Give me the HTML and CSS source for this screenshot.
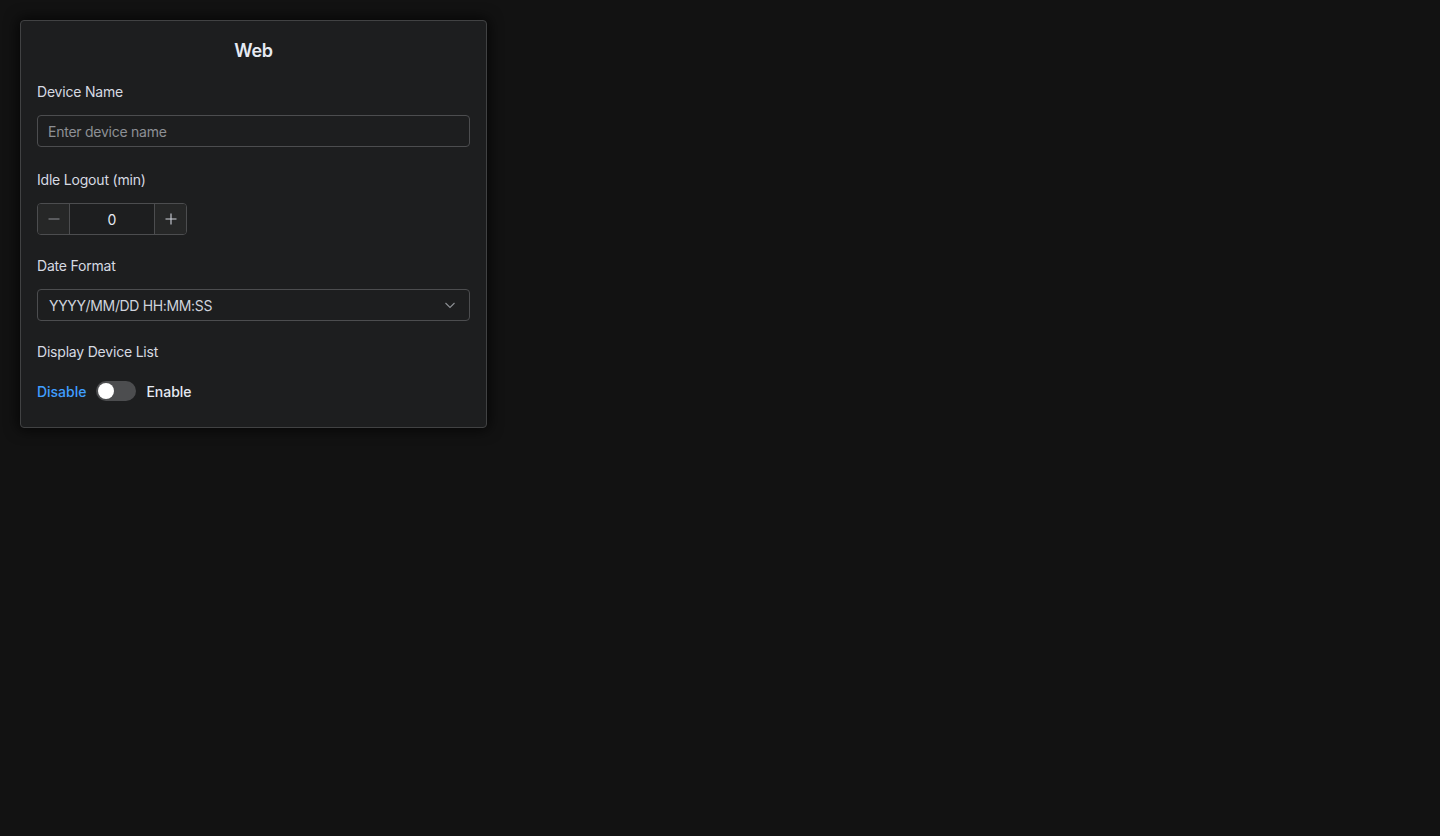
FILE: index.html
```html
<!DOCTYPE html>
<html lang="en">
<head>
<meta charset="utf-8">
<title>Web</title>
<link rel="stylesheet" href="styles.css">
</head>
<body>
<div class="card">
  <h2 class="title">Web</h2>
  <div class="field">
    <label class="label">Device Name</label>
    <div class="input"><input type="text" placeholder="Enter device name"></div>
  </div>
  <div class="field">
    <label class="label">Idle Logout (min)</label>
    <div class="number">
      <span class="nbtn minus"><svg viewBox="0 0 14 14" width="14" height="14"><path d="M1.5 7h11" stroke="currentColor" stroke-width="1.1" fill="none"/></svg></span>
      <span class="nval">0</span>
      <span class="nbtn plus"><svg viewBox="0 0 14 14" width="14" height="14"><path d="M1.5 7h11M7 1.5v11" stroke="currentColor" stroke-width="1.1" fill="none"/></svg></span>
    </div>
  </div>
  <div class="field field-tight">
    <label class="label">Date Format</label>
    <div class="select">
      <span class="sval">YYYY/MM/DD HH:MM:SS</span>
      <svg class="arrow" viewBox="0 0 14 14" width="14" height="14"><path d="M2.5 5l4.5 4.5L11.5 5" stroke="currentColor" stroke-width="1.1" fill="none"/></svg>
    </div>
  </div>
  <div class="field field-tight">
    <label class="label">Display Device List</label>
    <div class="switch-row">
      <span class="sw-text active">Disable</span>
      <span class="switch"><span class="knob"></span></span>
      <span class="sw-text">Enable</span>
    </div>
  </div>
</div>
</body>
</html>
```
FILE: styles.css
```css
html, body {
  margin: 0;
  padding: 0;
  background: #121212;
  font-family: Inter, "Noto Sans", sans-serif;
  color: #cfd3dc;
}
body {
  padding: 20px;
  height: 836px;
  box-sizing: border-box;
}
.card {
  width: 467px;
  box-sizing: border-box;
  background: #1d1e1f;
  border: 1px solid #414243;
  border-radius: 4px;
  padding: 17px 16px 20px;
  box-shadow: 0 0 14px 2px rgba(0, 0, 0, 0.7);
}
.title {
  margin: 0;
  height: 26px;
  line-height: 26px;
  font-size: 18px;
  font-weight: 600;
  text-align: center;
  color: #e5eaf3;
  letter-spacing: -0.2px;
}
.field {
  margin-top: 22px;
  display: flex;
  flex-direction: column;
}
.field:first-of-type { margin-top: 17px; }
.field-tight { margin-top: 20px; }
.label {
  display: block;
  height: 22px;
  line-height: 22px;
  font-size: 14px;
  color: #d6dae2;
  margin-bottom: 12px;
  letter-spacing: -0.2px;
}
.input {
  height: 32px;
  box-sizing: border-box;
  border: 1px solid #4c4d4f;
  border-radius: 4px;
  display: flex;
  align-items: center;
  padding: 0 10px;
}
.input input {
  flex: 1;
  background: transparent;
  border: 0;
  outline: 0;
  padding: 0;
  font-family: inherit;
  font-size: 14px;
  letter-spacing: -0.25px;
  color: #cfd3dc;
}
.input input::placeholder { color: #8d9095; }
.number {
  width: 150px;
  height: 32px;
  box-sizing: border-box;
  border: 1px solid #4c4d4f;
  border-radius: 4px;
  display: flex;
  overflow: hidden;
}
.nbtn {
  width: 31px;
  background: #262727;
  color: #a3a6ad;
  display: flex;
  align-items: center;
  justify-content: center;
}
.minus { border-right: 1px solid #4c4d4f; color: #8d9095; }
.plus { border-left: 1px solid #4c4d4f; color: #cfd3dc; }
.nval {
  flex: 1;
  display: flex;
  align-items: center;
  justify-content: center;
  font-size: 14px;
  color: #e5eaf3;
}
.select {
  height: 32px;
  box-sizing: border-box;
  border: 1px solid #4c4d4f;
  border-radius: 4px;
  display: flex;
  align-items: center;
  justify-content: space-between;
  padding: 0 12px 0 11px;
}
.sval {
  font-size: 14px;
  color: #cfd3dc;
  letter-spacing: -0.35px;
}
.arrow { color: #8d9095; }
.switch-row {
  height: 32px;
  display: flex;
  align-items: center;
  gap: 10px;
  font-size: 14px;
  font-weight: 500;
  letter-spacing: -0.02px;
}
.sw-text { color: #e5eaf3; }
.sw-text.active { color: #409eff; }
.switch {
  width: 40px;
  height: 20px;
  border-radius: 10px;
  background: #4c4d4f;
  display: flex;
  align-items: center;
  padding: 0 2px;
  box-sizing: border-box;
}
.knob {
  width: 16px;
  height: 16px;
  border-radius: 50%;
  background: #ffffff;
}
```
